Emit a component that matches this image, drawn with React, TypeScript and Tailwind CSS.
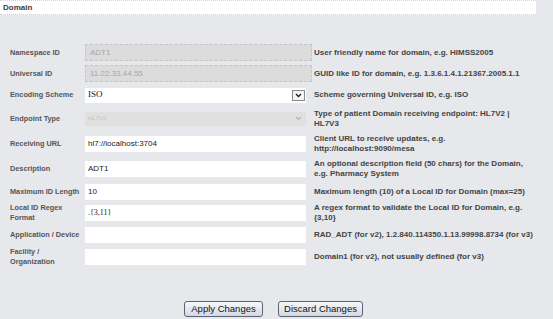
import React from "react";

type Row = {
  label: string;
  kind: "disabled" | "text" | "select" | "select-disabled";
  value?: string;
  desc: string;
  serif?: boolean;
  h: string;
};

const rows: Row[] = [
  { label: "Namespace ID", kind: "disabled", value: "ADT1", desc: "User friendly name for domain, e.g. HIMSS2005", h: "h-[21px]" },
  { label: "Universal ID", kind: "disabled", value: "11.22.33.44.55", desc: "GUID like ID for domain, e.g. 1.3.6.1.4.1.21367.2005.1.1", h: "h-[21px]" },
  { label: "Encoding Scheme", kind: "select", value: "ISO", desc: "Scheme governing Universal ID, e.g. ISO", serif: true, h: "h-[22px]" },
  { label: "Endpoint Type", kind: "select-disabled", value: "HL7V2", desc: "Type of patient Domain receiving endpoint: HL7V2 | HL7V3", h: "h-[25px]" },
  { label: "Receiving URL", kind: "text", value: "hl7://localhost:3704", desc: "Client URL to receive updates, e.g. http://localhost:9090/mesa", h: "h-[26px]" },
  { label: "Description", kind: "text", value: "ADT1", desc: "An optional description field (50 chars) for the Domain, e.g. Pharmacy System", h: "h-[24px]" },
  { label: "Maximum ID Length", kind: "text", value: "10", desc: "Maximum length (10) of a Local ID for Domain (max=25)", h: "h-[21px]" },
  { label: "Local ID Regex Format", kind: "text", value: ".{3,11}", desc: "A regex format to validate the Local ID for Domain, e.g. {3,10}", serif: true, h: "h-[22px]" },
  { label: "Application / Device", kind: "text", value: "", desc: "RAD_ADT (for v2), 1.2.840.114350.1.13.99998.8734 (for v3)", h: "h-[22px]" },
  { label: "Facility / Organization", kind: "text", value: "", desc: "Domain1 (for v2), not usually defined (for v3)", h: "h-[22px]" },
];

const Chevron = ({ light }: { light?: boolean }) => (
  <svg width="7" height="5" viewBox="0 0 7 5">
    <path d="M1 1 L3.5 3.5 L6 1" fill="none" stroke={light ? "#b8b8b8" : "#222"} strokeWidth="1.4" />
  </svg>
);

const Field = ({ row }: { row: Row }) => {
  const font = row.serif ? "font-['Liberation_Serif',serif]" : "font-['Liberation_Sans',Arial,sans-serif]";
  if (row.kind === "disabled") {
    return (
      <div className={`w-[227px] h-[17px] bg-[#dcdcdc] border border-dashed border-[#c6c6c6] flex items-center px-[4px] text-[8px] text-[#a8a8a8] ${font}`}>
        {row.value}
      </div>
    );
  }
  if (row.kind === "select") {
    return (
      <div className={`w-[221px] h-[15px] bg-white flex items-center justify-between pl-[3px] pr-[1px] text-[9px] text-[#111] ${font}`}>
        <span>{row.value}</span>
        <span className="w-[13px] h-[11px] border border-[#8a8a8a] bg-[#f4f4f4] flex items-center justify-center">
          <Chevron />
        </span>
      </div>
    );
  }
  if (row.kind === "select-disabled") {
    return (
      <div className={`w-[221px] h-[14px] bg-[#e0e0e0] flex items-center justify-between pl-[3px] pr-[1px] text-[6px] text-[#c4c4c4] ${font}`}>
        <span>{row.value}</span>
        <span className="w-[13px] h-[11px] flex items-center justify-center">
          <Chevron light />
        </span>
      </div>
    );
  }
  return (
    <div className={`w-[221px] h-[16px] bg-white flex items-center px-[3px] text-[8px] text-[#222] ${font}`}>
      {row.value}
    </div>
  );
};

export default function App() {
  return (
    <div className="w-[553px] h-[319px] bg-[#e6e8ec] font-['Liberation_Sans',Arial,sans-serif] overflow-hidden flex flex-col">
      {/* Header */}
      <div className="w-[536px] h-[15px] bg-white border-t border-[#d4d4d4] border-b border-b-[#cfd2d8] border-dotted flex items-center pl-[3px]">
        <span className="text-[8px] font-bold text-[#3c3c3c]">Domain</span>
      </div>

      {/* Form rows */}
      <div className="pt-[27px] flex flex-col">
        {rows.map((row) => (
          <div key={row.label} className={`flex items-center ${row.h}`}>
            <div className="w-[85px] pl-[10px] pr-[1px] text-[7.3px] font-bold text-[#555] leading-[10px]">
              {row.label}
            </div>
            <div className="w-[229px] shrink-0">
              <Field row={row} />
            </div>
            <div className="w-[221px] text-[8px] font-bold text-[#444] leading-[10px]">{row.desc}</div>
          </div>
        ))}
      </div>

      {/* Buttons */}
      <div className="mt-auto mb-[2px] flex justify-center gap-[15px] pr-[6px]">
        <button className="w-[79px] h-[16px] rounded-[3px] border border-[#5d6275] bg-gradient-to-b from-[#f7f8fb] to-[#d3d8e3] text-[9.5px] text-[#111] leading-none">
          Apply Changes
        </button>
        <button className="w-[85px] h-[16px] rounded-[3px] border border-[#5d6275] bg-gradient-to-b from-[#f7f8fb] to-[#d3d8e3] text-[9.5px] text-[#111] leading-none">
          Discard Changes
        </button>
      </div>
    </div>
  );
}
